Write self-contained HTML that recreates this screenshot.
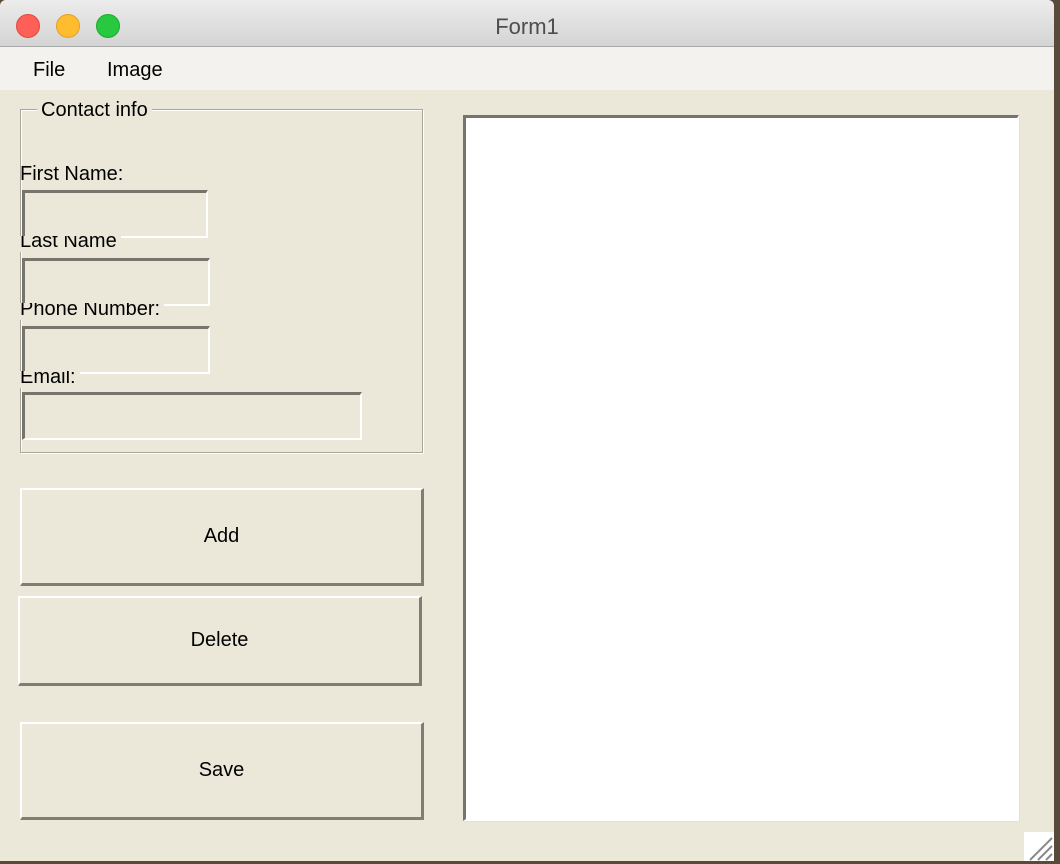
<!DOCTYPE html>
<html><head><meta charset="utf-8"><style>
*{margin:0;padding:0;box-sizing:border-box}
body{width:1060px;height:864px;overflow:hidden;background:#5a4a3a;font-family:"Liberation Sans",sans-serif;position:relative}
.win{position:absolute;left:0;top:0;width:1054px;height:861px;background:#ebe8da;border-radius:6px 6px 0 0;overflow:hidden}
.title{position:absolute;left:0;top:0;width:1054px;height:47px;background:linear-gradient(#ececec,#d4d4d4);border-bottom:1px solid #a9a9a9}
.title span{position:absolute;left:0;width:100%;text-align:center;top:14px;font-size:22px;color:#4d4d4d}
.dot{position:absolute;top:14px;width:24px;height:24px;border-radius:50%}
.menu{position:absolute;left:0;top:47px;width:1054px;height:43px;background:#f3f2ee}
.t{position:absolute;font-size:20px;color:#000;white-space:nowrap;line-height:22px}
.grp{position:absolute;left:20px;top:109px;width:403px;height:344px;border:1px solid #a8a69a;box-shadow:inset 1px 1px 0 #fff,1px 1px 0 #fff}
.tb{position:absolute;background:#ebe8da;border-top:3px solid #76756b;border-left:3px solid #76756b;border-right:2px solid #fff;border-bottom:2px solid #fff}
.btn{position:absolute;background:#ebe8da;border-top:2px solid #fff;border-left:2px solid #fff;border-right:3px solid #807e72;border-bottom:3px solid #807e72;display:flex;align-items:center;justify-content:center;font-size:20px}
.panel{position:absolute;left:463px;top:115px;width:556px;height:706px;background:#fff;border-top:3px solid #76756b;border-left:3px solid #76756b;border-right:2px solid #fff;border-bottom:2px solid #fff;box-shadow:1px 1px 0 #e4e1d4}
.clip{position:absolute;overflow:hidden;background:#ebe8da;padding-right:4px}
.clip .t{position:relative}
</style></head><body>
<div class="win">
<div class="title"><div class="dot" style="left:16px;background:#fe5f57;border:1px solid #e2463f"></div><div class="dot" style="left:56px;background:#febc2e;border:1px solid #e1a126"></div><div class="dot" style="left:96px;background:#28c840;border:1px solid #1aab29"></div><span>Form1</span></div>
<div class="menu"><div class="t" style="left:33px;top:12px">File</div><div class="t" style="left:107px;top:12px">Image</div></div>
<div class="grp"></div>
<div class="t" style="left:37px;top:99px;background:#ebe8da;padding:0 4px">Contact info</div>
<div class="tb" style="left:22px;top:190px;width:186px;height:48px"></div>
<div class="t" style="left:20px;top:163px">First Name:</div>
<div class="tb" style="left:22px;top:258px;width:188px;height:48px"></div>
<div class="clip" style="left:20px;top:236px;height:16px"><div class="t" style="top:-6px">Last Name</div></div>
<div class="tb" style="left:22px;top:326px;width:188px;height:48px"></div>
<div class="clip" style="left:20px;top:303px;height:17px"><div class="t" style="top:-5px">Phone Number:</div></div>
<div class="tb" style="left:22px;top:392px;width:340px;height:48px"></div>
<div class="clip" style="left:20px;top:371px;height:17px"><div class="t" style="top:-5px">Email:</div></div>
<div class="btn" style="left:20px;top:488px;width:404px;height:98px">Add</div>
<div class="btn" style="left:18px;top:596px;width:404px;height:90px">Delete</div>
<div class="btn" style="left:20px;top:722px;width:404px;height:98px">Save</div>
<div class="panel"></div>
<svg style="position:absolute;left:1024px;top:832px" width="30" height="29"><rect width="30" height="29" fill="#fff"/><path d="M6 28L28 6M14 28L28 14M22 28L28 22" stroke="#8a8a8a" stroke-width="2"/></svg>
</div>
</body></html>
